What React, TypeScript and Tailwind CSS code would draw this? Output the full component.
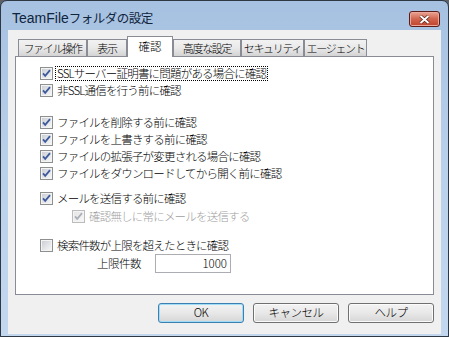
import React from 'react';

const jp = { fontFamily: '"Noto Sans CJK JP", "Liberation Sans", sans-serif' };

// Win7 style check box, drawn as svg
function Box({ checked, disabled }: { checked: boolean; disabled?: boolean }) {
  return (
    <svg width="13" height="13" viewBox="0 0 13 13" className="shrink-0">
      <defs>
        <linearGradient id={disabled ? 'gd' : 'gb'} x1="0" y1="0" x2="1" y2="1">
          <stop offset="0" stopColor={disabled ? '#e6e6e6' : '#cbcfd5'} />
          <stop offset="1" stopColor={disabled ? '#f7f7f7' : '#f6f6f6'} />
        </linearGradient>
      </defs>
      <rect x="0.5" y="0.5" width="12" height="12" fill="#f4f4f4" stroke={disabled ? '#bcbcbc' : '#8e8f8f'} />
      <rect x="2" y="2" width="9" height="9" fill={`url(#${disabled ? 'gd' : 'gb'})`} />
      {checked && (
        <path
          d="M3 6.4 L5.2 8.8 L10 3.2"
          fill="none"
          stroke={disabled ? '#aab0b8' : '#3d5a9c'}
          strokeWidth="1.8"
        />
      )}
    </svg>
  );
}

function Row({
  label,
  checked = true,
  disabled,
  focus,
  className = '',
}: {
  label: string;
  checked?: boolean;
  disabled?: boolean;
  focus?: boolean;
  className?: string;
}) {
  return (
    <div className={`flex items-center h-[17px] ${className}`}>
      <Box checked={checked} disabled={disabled} />
      <span
        className={`ml-[2px] px-px leading-[13px] text-[11.5px] tracking-[-0.8px] whitespace-nowrap border ${
          focus ? 'border-dotted border-black' : 'border-transparent'
        } ${disabled ? 'text-[#a0a0a0]' : 'text-black'}`}
      >
        {label}
      </span>
    </div>
  );
}

const tabs = [
  { name: 'ファイル操作', w: 'w-[69px]' },
  { name: '表示', w: 'w-[40px]' },
  { name: '確認', w: 'w-[46px]', active: true },
  { name: '高度な設定', w: 'w-[68px]' },
  { name: 'セキュリティ', w: 'w-[63px]' },
  { name: 'エージェント', w: 'w-[63px]' },
];

function Btn({ label, focus }: { label: string; focus?: boolean }) {
  return (
    <button
      className={`w-[86px] h-[20px] rounded-[3px] border text-[11.5px] tracking-[-0.5px] text-black bg-gradient-to-b from-[#f3f3f3] via-[#e8e8e8] to-[#d6d6d6] ${
        focus ? 'border-[#3c7fb1] shadow-[inset_0_0_0_1px_#9fdcf5]' : 'border-[#707070] shadow-[inset_0_0_0_1px_#fbfbfb]'
      }`}
    >
      {label}
    </button>
  );
}

export default function App() {
  return (
    <div className="w-[449px] h-[337px] bg-[#5c6068] font-light" style={jp}>
      <div className="h-full rounded-t-[7px] border border-[#2e3744] bg-gradient-to-b from-[#a6c1e1] via-[#bad1eb] to-[#c3d8ef] flex flex-col px-[7px] pb-[2px]">
        {/* title bar */}
        <div className="h-[29px] flex items-start justify-between">
          <div className="mt-[9px] ml-[4px] text-[12.5px] leading-[16px] text-[#10243c] font-normal">
            <span className="text-[14px]" style={{ fontFamily: '"Liberation Sans", sans-serif' }}>
              TeamFile
            </span>
            <span className="tracking-[-0.5px]">フォルダの設定</span>
          </div>
          <div className="mt-[10px] mr-[1px] w-[31px] h-[16px] rounded-[3px] border border-[#5b1c1a] bg-gradient-to-b from-[#e7a595] via-[#d2644d] to-[#c0432c] shadow-[inset_0_0_0_1px_#eca89a] flex items-center justify-center">
            <svg width="11" height="9" viewBox="0 0 11 9">
              <path d="M1.5 1 L9.5 8 M9.5 1 L1.5 8" stroke="#4a1810" strokeWidth="3.2" />
              <path d="M1.5 1 L9.5 8 M9.5 1 L1.5 8" stroke="#ffffff" strokeWidth="2" />
            </svg>
          </div>
        </div>

        {/* client area */}
        <div className="flex-1 bg-[#f0f0f0] flex flex-col px-[7px] pt-[6px] pb-[11px]">
          <div className="h-[20px] flex items-end pl-[3px]">
            {tabs.map((t) =>
              t.active ? (
                <div
                  key={t.name}
                  className={`${t.w} h-[21px] -mb-px relative z-10 bg-white border border-b-0 border-[#898c95] flex items-start justify-center pt-[1px] text-[11.5px] whitespace-nowrap text-black`}
                >
                  {t.name}
                </div>
              ) : (
                <div
                  key={t.name}
                  className={`${t.w} h-[17px] shrink-0 border border-b-0 border-[#898c95] bg-gradient-to-b from-[#f2f2f2] via-[#e9e9e9] to-[#d4d4d4] flex items-center justify-center text-[11px] tracking-[-1.3px] whitespace-nowrap text-black`}
                >
                  {t.name}
                </div>
              )
            )}
          </div>

          <div className="h-[239px] bg-white border border-[#898c95] pl-[24px] pt-[8px] flex flex-col">
            <Row label="SSLサーバー証明書に問題がある場合に確認" focus />
            <Row label="非SSL通信を行う前に確認" />
            <Row className="mt-[15px]" label="ファイルを削除する前に確認" />
            <Row label="ファイルを上書きする前に確認" />
            <Row label="ファイルの拡張子が変更される場合に確認" />
            <Row label="ファイルをダウンロードしてから開く前に確認" />
            <Row className="mt-[8px]" label="メールを送信する前に確認" />
            <Row className="mt-px pl-[32px]" label="確認無しに常にメールを送信する" disabled />
            <Row className="mt-[12px]" label="検索件数が上限を超えたときに確認" checked={false} />
            <div className="flex items-center h-[19px] mt-[0px]">
              <span className="ml-[57px] w-[58px] text-[11.5px] tracking-[-0.5px] text-black">上限件数</span>
              <div className="w-[76px] h-[19px] border border-[#abadb3] bg-white flex items-center justify-end pr-[3px] text-[11.5px] text-black">
                1000
              </div>
            </div>
          </div>

          <div className="mt-[8px] flex justify-end gap-[9px] pr-0">
            <Btn label="OK" focus />
            <Btn label="キャンセル" />
            <Btn label="ヘルプ" />
          </div>
        </div>
      </div>
    </div>
  );
}
